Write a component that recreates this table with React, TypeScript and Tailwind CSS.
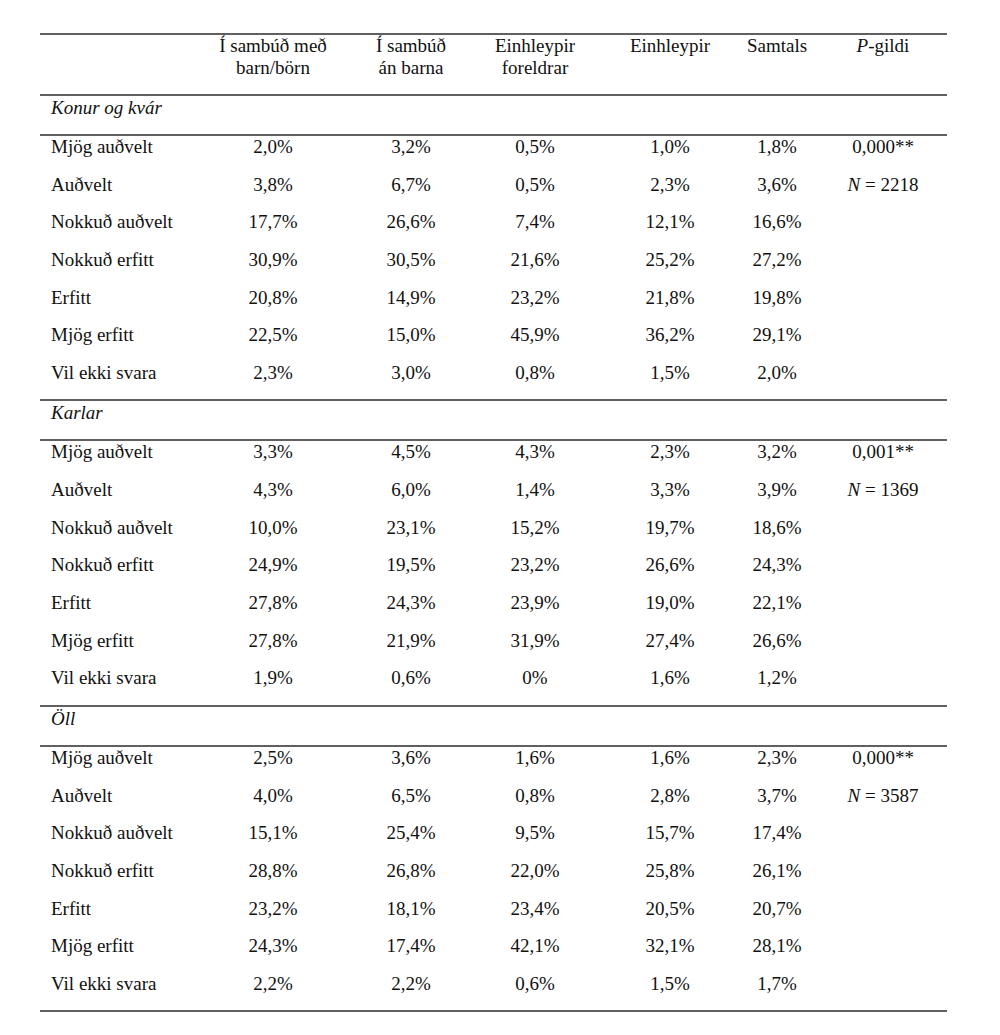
const cols = "grid grid-cols-[165px_136px_140px_108px_162px_52px_144px]";

type Section = {
  title: string;
  p: string;
  n: string;
  rows: [string, string, string, string, string, string][];
};

const sections: Section[] = [
  {
    title: "Konur og kvár",
    p: "0,000**",
    n: "2218",
    rows: [
      ["Mjög auðvelt", "2,0%", "3,2%", "0,5%", "1,0%", "1,8%"],
      ["Auðvelt", "3,8%", "6,7%", "0,5%", "2,3%", "3,6%"],
      ["Nokkuð auðvelt", "17,7%", "26,6%", "7,4%", "12,1%", "16,6%"],
      ["Nokkuð erfitt", "30,9%", "30,5%", "21,6%", "25,2%", "27,2%"],
      ["Erfitt", "20,8%", "14,9%", "23,2%", "21,8%", "19,8%"],
      ["Mjög erfitt", "22,5%", "15,0%", "45,9%", "36,2%", "29,1%"],
      ["Vil ekki svara", "2,3%", "3,0%", "0,8%", "1,5%", "2,0%"],
    ],
  },
  {
    title: "Karlar",
    p: "0,001**",
    n: "1369",
    rows: [
      ["Mjög auðvelt", "3,3%", "4,5%", "4,3%", "2,3%", "3,2%"],
      ["Auðvelt", "4,3%", "6,0%", "1,4%", "3,3%", "3,9%"],
      ["Nokkuð auðvelt", "10,0%", "23,1%", "15,2%", "19,7%", "18,6%"],
      ["Nokkuð erfitt", "24,9%", "19,5%", "23,2%", "26,6%", "24,3%"],
      ["Erfitt", "27,8%", "24,3%", "23,9%", "19,0%", "22,1%"],
      ["Mjög erfitt", "27,8%", "21,9%", "31,9%", "27,4%", "26,6%"],
      ["Vil ekki svara", "1,9%", "0,6%", "0%", "1,6%", "1,2%"],
    ],
  },
  {
    title: "Öll",
    p: "0,000**",
    n: "3587",
    rows: [
      ["Mjög auðvelt", "2,5%", "3,6%", "1,6%", "1,6%", "2,3%"],
      ["Auðvelt", "4,0%", "6,5%", "0,8%", "2,8%", "3,7%"],
      ["Nokkuð auðvelt", "15,1%", "25,4%", "9,5%", "15,7%", "17,4%"],
      ["Nokkuð erfitt", "28,8%", "26,8%", "22,0%", "25,8%", "26,1%"],
      ["Erfitt", "23,2%", "18,1%", "23,4%", "20,5%", "20,7%"],
      ["Mjög erfitt", "24,3%", "17,4%", "42,1%", "32,1%", "28,1%"],
      ["Vil ekki svara", "2,2%", "2,2%", "0,6%", "1,5%", "1,7%"],
    ],
  },
];

function Rule() {
  return <div className="h-[2px] bg-[#606060]" />;
}

function Cell({ children, last }: { children?: React.ReactNode; last?: boolean }) {
  return (
    <div className={`flex justify-center whitespace-nowrap ${last ? "pl-[16px]" : ""}`}>
      {children}
    </div>
  );
}

function Block({ s }: { s: Section }) {
  return (
    <>
      <div className="h-[38px] pl-[11px] pt-[1px] italic">{s.title}</div>
      <Rule />
      {s.rows.map((r, i) => (
        <div key={r[0]} className={`${cols} h-[37.65px]`}>
          <div className="pl-[11px] whitespace-nowrap">{r[0]}</div>
          {r.slice(1).map((v, j) => (
            <Cell key={j}>{v}</Cell>
          ))}
          <Cell last>
            {i === 0 && s.p}
            {i === 1 && (
              <span>
                <i>N</i> = {s.n}
              </span>
            )}
          </Cell>
        </div>
      ))}
      <Rule />
    </>
  );
}

export default function App() {
  return (
    <div className="w-[1000px] h-[1035px] bg-white text-[#111] font-[family-name:Liberation_Serif,serif] text-[19px] leading-[22px]">
      <div className="ml-[40px] w-[907px] pt-[33px]">
        <Rule />
        <div className={`${cols} h-[59px]`}>
          <div />
          <Cell>
            <div className="text-center">
              Í sambúð með
              <br />
              barn/börn
            </div>
          </Cell>
          <Cell>
            <div className="text-center">
              Í sambúð
              <br />
              án barna
            </div>
          </Cell>
          <Cell>
            <div className="text-center">
              Einhleypir
              <br />
              foreldrar
            </div>
          </Cell>
          <Cell>Einhleypir</Cell>
          <Cell>Samtals</Cell>
          <Cell last>
            <span>
              <i>P</i>-gildi
            </span>
          </Cell>
        </div>
        <Rule />
        {sections.map((s) => (
          <Block key={s.title} s={s} />
        ))}
      </div>
    </div>
  );
}
